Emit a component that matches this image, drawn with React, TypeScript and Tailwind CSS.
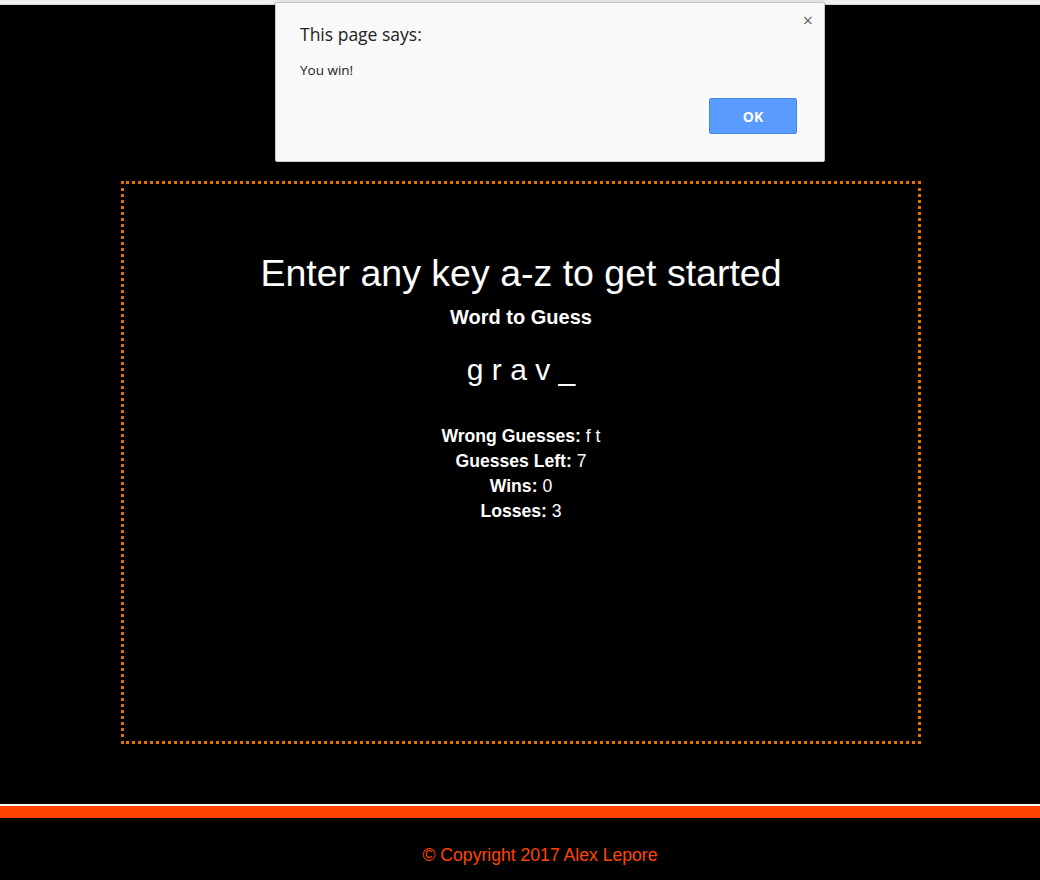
import React from 'react';

// --- ALERT OVERLAY ---
const AlertBox: React.FC = () => (
  <div
    className="absolute left-[275px] top-[2px] w-[550px] h-[160px] bg-[#f9f9f9] border border-[#c8c8c8] rounded-[2px] shadow-[0_2px_6px_rgba(0,0,0,0.35)]"
    style={{ fontFamily: '"Open Sans", "Noto Sans", sans-serif' }}
  >
    <span className="absolute right-[11px] top-[8px] text-[18px] leading-none text-[#6b6b6b]">×</span>
    <div className="pl-[24px] pt-[19px] text-[17.5px] leading-[24px] text-[#222]">This page says:</div>
    <div className="pl-[24px] pt-[14px] text-[13.5px] leading-[20px] text-[#222]">You win!</div>
    <div className="flex justify-end pr-[27px] pt-[18px]">
      <button className="w-[88px] h-[36px] bg-[#5a9bff] border border-[#4a86e0] rounded-[2px] text-white text-[14px] font-bold">
        OK
      </button>
    </div>
  </div>
);

// --- GAME PANEL ---
const GamePanel: React.FC = () => {
  const stats = [
    { label: 'Wrong Guesses:', value: 'f t' },
    { label: 'Guesses Left:', value: '7' },
    { label: 'Wins:', value: '0' },
    { label: 'Losses:', value: '3' },
  ];

  return (
    <div className="ml-[121px] w-[800px] h-[563px] border-[3px] border-dotted border-[#e37100] flex flex-col items-center text-white">
      <h1 className="mt-[68px] text-[37.5px] leading-[42px]">Enter any key a-z to get started</h1>
      <h2 className="mt-[11px] text-[20px] leading-[24px] font-bold">Word to Guess</h2>
      <div className="mt-[23px] text-[30px] leading-[36px] whitespace-pre">g r a v _</div>
      <div className="mt-[36px] flex flex-col items-center">
        {stats.map((s, i) => (
          <div key={i} className="text-[17.6px] leading-[25px]">
            <span className="font-bold">{s.label}</span> {s.value}
          </div>
        ))}
      </div>
    </div>
  );
};

export default function App() {
  return (
    <div
      className="relative min-h-[880px] bg-black overflow-hidden"
      style={{ fontFamily: '"Liberation Sans", Arial, sans-serif' }}
    >
      <div className="h-[5px] bg-[#f1f1f1] border-b border-[#d6d6d6]" />
      <div className="pt-[176px]">
        <GamePanel />
      </div>
      <footer className="mt-[60px]">
        <div className="h-[2px] bg-white" />
        <div className="h-[12px] bg-[#ff4500]" />
        <p className="mt-[25px] pl-[40px] text-center text-[17.6px] leading-[24px] text-[#ff4500]">© Copyright 2017 Alex Lepore</p>
      </footer>
      <AlertBox />
    </div>
  );
}
